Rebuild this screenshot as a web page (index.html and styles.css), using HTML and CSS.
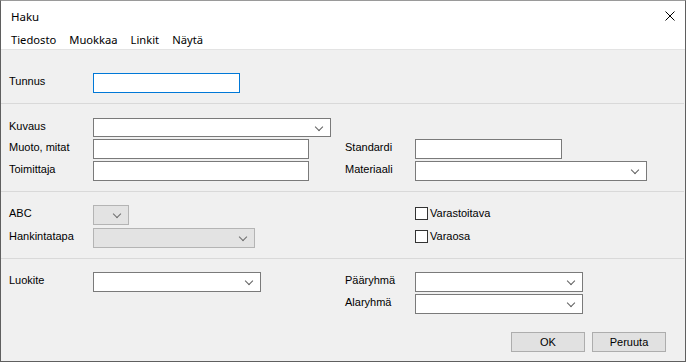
FILE: index.html
```html
<!DOCTYPE html>
<html lang="fi">
<head>
<meta charset="utf-8">
<title>Haku</title>
<link rel="stylesheet" href="styles.css">
</head>
<body>
<div class="window">
  <div class="titlebar">
    <span class="title">Haku</span>
    <span class="close" aria-label="Sulje">
      <svg width="10" height="10" viewBox="0 0 10 10"><path d="M0.5 0.5 L9.5 9.5 M9.5 0.5 L0.5 9.5" stroke="#000" stroke-width="1" fill="none"/></svg>
    </span>
  </div>
  <div class="menubar">
    <span class="menu-item">Tiedosto</span>
    <span class="menu-item">Muokkaa</span>
    <span class="menu-item">Linkit</span>
    <span class="menu-item">Näytä</span>
  </div>
  <div class="client">
    <section class="sec sec1">
      <label class="lbl">Tunnus</label>
      <div class="field text focused w147"></div>
    </section>

    <section class="sec sec2">
      <label class="lbl">Kuvaus</label>
      <div class="field combo w238 h19 span3"><i class="chev"></i></div>

      <label class="lbl">Muoto, mitat</label>
      <div class="field text w216"></div>
      <label class="lbl">Standardi</label>
      <div class="field text w147"></div>

      <label class="lbl">Toimittaja</label>
      <div class="field text w216"></div>
      <label class="lbl">Materiaali</label>
      <div class="field combo w232"><i class="chev"></i></div>
    </section>

    <section class="sec sec3">
      <label class="lbl">ABC</label>
      <div class="field combo disabled w36"><i class="chev"></i></div>
      <span></span>
      <label class="check"><span class="box"></span>Varastoitava</label>

      <label class="lbl">Hankintatapa</label>
      <div class="field combo disabled w162"><i class="chev"></i></div>
      <span></span>
      <label class="check"><span class="box"></span>Varaosa</label>
    </section>

    <section class="sec sec4">
      <div class="grid4">
        <label class="lbl">Luokite</label>
        <div class="field combo w168"><i class="chev"></i></div>
        <label class="lbl">Pääryhmä</label>
        <div class="field combo w168"><i class="chev"></i></div>

        <span></span>
        <span></span>
        <label class="lbl">Alaryhmä</label>
        <div class="field combo w168"><i class="chev"></i></div>
      </div>
      <div class="buttons">
        <button class="btn">OK</button>
        <button class="btn">Peruuta</button>
      </div>
    </section>
  </div>
</div>
</body>
</html>
```

FILE: styles.css
```css
html, body {
  margin: 0;
  padding: 0;
  background: #f0f0f0;
}

.window {
  width: 686px;
  height: 362px;
  box-sizing: border-box;
  border-left: 1px solid #5f5f5f;
  border-right: 1px solid #5f5f5f;
  border-bottom: 1px solid #5f5f5f;
  border-top: 1px solid #9a9a9a;
  display: flex;
  flex-direction: column;
  background: #f0f0f0;
  font-family: "Liberation Sans", Arial, sans-serif;
  font-size: 11px;
  color: #000;
}

.titlebar {
  height: 29px;
  background: #fff;
  display: flex;
  align-items: center;
  justify-content: space-between;
  padding: 0 10px 0 10px;
  font-family: "Noto Sans", "Open Sans", sans-serif;
  font-size: 11.5px;
}

.title {
  padding-top: 1px;
}

.close {
  display: flex;
}

.menubar {
  height: 19px;
  background: #fff;
  display: flex;
  align-items: center;
  padding-left: 10px;
  gap: 13px;
  font-family: "Noto Sans", "Open Sans", sans-serif;
  font-size: 11.2px;
  border-bottom: 1px solid #e3e3e3;
}

.client {
  flex: 1;
  display: flex;
  flex-direction: column;
}

.sec {
  display: grid;
  grid-template-columns: 84px 252px 70px 1fr;
  padding-left: 8px;
  align-items: start;
  border-bottom: 1px solid #d9d9d9;
  margin-right: 1px;
}

.sec1 {
  padding-top: 23px;
  padding-bottom: 10px;
  grid-template-columns: 84px 1fr;
}

.sec2 {
  padding-top: 14px;
  padding-bottom: 10px;
  row-gap: 2px;
}

.sec3 {
  padding-top: 13px;
  padding-bottom: 10px;
  row-gap: 3px;
}

.sec4 {
  display: flex;
  flex-direction: column;
  align-items: stretch;
  border-bottom: none;
  padding-top: 13px;
  flex: 1;
}

.grid4 {
  display: grid;
  grid-template-columns: 84px 252px 70px 1fr;
  row-gap: 2px;
  align-items: start;
}

.span3 {
  grid-column: 2 / span 3;
}

.lbl {
  padding-top: 2px;
  line-height: 13px;
  white-space: nowrap;
}

.field {
  box-sizing: border-box;
  height: 20px;
  background: #fff;
  border: 1px solid #7a7a7a;
  position: relative;
  justify-self: start;
}

.field.focused {
  border-color: #0078d7;
}

.field.h19 { height: 19px; }

.field.disabled {
  background: #e3e3e3;
  border-color: #b4b4b4;
}

.w36 { width: 36px; }
.w147 { width: 147px; }
.w162 { width: 162px; }
.w168 { width: 168px; }
.w216 { width: 216px; }
.w232 { width: 232px; }
.w238 { width: 238px; }

.chev {
  position: absolute;
  right: 8px;
  top: 5px;
  width: 5px;
  height: 5px;
  border-right: 1px solid #606060;
  border-bottom: 1px solid #606060;
  transform: rotate(45deg);
}

.field.disabled .chev {
  border-color: #6d6d6d;
}

.check {
  display: flex;
  align-items: center;
  gap: 2px;
  padding-top: 2px;
  line-height: 13px;
}

.box {
  box-sizing: border-box;
  width: 13px;
  height: 13px;
  border: 1px solid #333;
  background: #fff;
}

.buttons {
  display: flex;
  justify-content: flex-end;
  gap: 7px;
  padding-right: 18px;
  margin-top: 18px;
}

.btn {
  box-sizing: border-box;
  width: 74px;
  height: 20px;
  background: #e1e1e1;
  border: 1px solid #adadad;
  font-family: "Liberation Sans", Arial, sans-serif;
  font-size: 11px;
  color: #000;
  padding: 0;
}
```
